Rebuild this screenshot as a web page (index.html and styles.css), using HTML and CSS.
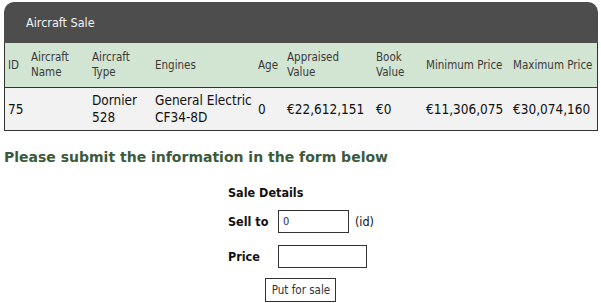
FILE: index.html
```html
<!DOCTYPE html>
<html lang="en">
<head>
    <meta charset="UTF-8">
    <title>Aircraft Sale</title>
    <link rel="stylesheet" href="styles.css">
</head>
<body>
<div class="page">
    <div class="panel">
        <div class="panel-title">Aircraft Sale</div>
        <table class="sale-table">
            <thead>
            <tr>
                <th class="c-id">ID</th>
                <th class="c-name">Aircraft Name</th>
                <th class="c-type">Aircraft Type</th>
                <th class="c-eng">Engines</th>
                <th class="c-age">Age</th>
                <th class="c-appr">Appraised Value</th>
                <th class="c-book">Book Value</th>
                <th class="c-min nowrap">Minimum Price</th>
                <th class="c-max nowrap">Maximum Price</th>
            </tr>
            </thead>
            <tbody>
            <tr>
                <td>75</td>
                <td></td>
                <td>Dornier 528</td>
                <td>General Electric CF34-8D</td>
                <td>0</td>
                <td class="nowrap">€22,612,151</td>
                <td>€0</td>
                <td class="nowrap">€11,306,075</td>
                <td class="nowrap">€30,074,160</td>
            </tr>
            </tbody>
        </table>
    </div>

    <h2 class="notice">Please submit the information in the form below</h2>

    <form class="sale-form">
        <div class="form-title">Sale Details</div>
        <div class="form-row">
            <label for="sell-to" class="form-label">Sell to</label>
            <input type="text" id="sell-to" class="sell-input" value="0">
            <span class="hint">(id)</span>
        </div>
        <div class="form-row">
            <label for="price" class="form-label">Price</label>
            <input type="text" id="price" class="price-input">
        </div>
        <div class="form-actions">
            <button type="submit">Put for sale</button>
        </div>
    </form>
</div>
</body>
</html>
```

FILE: styles.css
```css
body {
    margin: 0;
    font-family: "DejaVu Sans Condensed", "DejaVu Sans", sans-serif;
    font-stretch: condensed;
    background: #fff;
    color: #111
}

.page {
    padding: 2px 4px 0 4px;
    width: 594px
}

.panel-title {
    height: 41px;
    line-height: 41px;
    padding-left: 22px;
    background: #4d4d4d;
    color: #f2f2f2;
    font-size: 12.5px;
    border-radius: 10px 10px 0 0
}

.sale-table {
    width: 594px;
    border-collapse: collapse;
    table-layout: fixed;
    border: 1px solid #333;
    border-top: none
}

.sale-table th {
    background: #d2e4d2;
    color: #3a3a3a;
    font-weight: normal;
    font-size: 11.5px;
    line-height: 15px;
    text-align: left;
    padding: 7px 3px;
    border-bottom: 1px solid #333
}

.sale-table td {
    background: #f2f2f2;
    font-size: 13.5px;
    line-height: 17px;
    padding: 4px 3px;
    vertical-align: middle
}

.nowrap {
    white-space: nowrap
}

.c-id { width: 17px }
.c-name { width: 55px }
.c-type { width: 57px }
.c-eng { width: 97px }
.c-age { width: 23px }
.c-appr { width: 83px }
.c-book { width: 44px }
.c-min { width: 81px }
.c-max { width: 81px }

.notice {
    margin: 18px 0 0;
    font-family: "DejaVu Sans", sans-serif;
    font-stretch: normal;
    font-size: 14px;
    line-height: 17px;
    color: #3b5a3b
}

.sale-form {
    width: max-content;
    margin: 19px auto 0
}

.form-title {
    font-weight: bold;
    font-size: 12.5px;
    line-height: 16px;
    margin-bottom: 9px
}

.form-row {
    display: flex;
    align-items: center;
    gap: 6px;
    margin-bottom: 12px;
    font-size: 12.5px
}

.form-label {
    font-weight: bold;
    width: 44px
}

input {
    box-sizing: border-box;
    height: 23px;
    border: 1px solid #333;
    padding: 0 4px;
    font-family: inherit;
    font-size: 11px;
    color: #2d2d6b;
    outline: none
}

.sell-input {
    width: 71px
}

.price-input {
    width: 89px
}

.form-actions {
    text-align: center;
    margin-top: -2px
}

button {
    box-sizing: border-box;
    height: 24px;
    width: 71px;
    padding: 0;
    background: #fff;
    border: 1px solid #333;
    font-family: inherit;
    font-size: 11.5px;
    color: #333
}
```
